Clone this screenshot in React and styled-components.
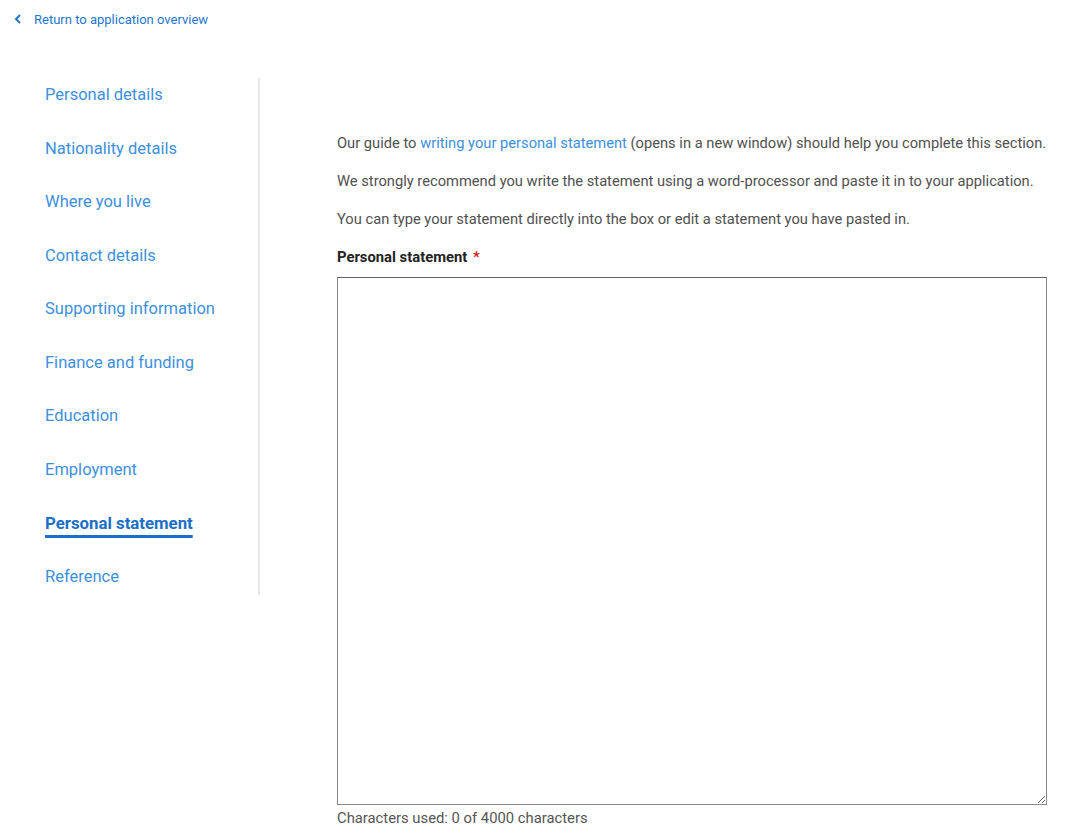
import styled, { createGlobalStyle } from "styled-components";

const GlobalStyle = createGlobalStyle`
  body {
    margin: 0;
    background: #ffffff;
    font-family: Roboto, "Liberation Sans", Arial, sans-serif;
  }
`;

const sections = [
  "Personal details",
  "Nationality details",
  "Where you live",
  "Contact details",
  "Supporting information",
  "Finance and funding",
  "Education",
  "Employment",
  "Personal statement",
  "Reference",
];

export default function App() {
  const active = "Personal statement";
  const maxChars = 4000;
  return (
    <Page>
      <GlobalStyle />
      <TopBar>
        <BackLink href="#">
          <svg width="8" height="10" viewBox="0 0 8 10" aria-hidden="true">
            <path d="M6 1 L2 5 L6 9" fill="none" stroke="#1f76d2" strokeWidth="2" />
          </svg>
          Return to application overview
        </BackLink>
      </TopBar>
      <Layout>
        <SideNav>
          {sections.map((name) => (
            <NavItem key={name}>
              <NavLink href="#" $active={name === active}>
                {name}
              </NavLink>
            </NavItem>
          ))}
        </SideNav>
        <Main>
          <Paragraph>
            Our guide to <InlineLink href="#">writing your personal statement</InlineLink> (opens in a new
            window) should help you complete this section.
          </Paragraph>
          <Paragraph>
            We strongly recommend you write the statement using a word-processor and paste it in to your
            application.
          </Paragraph>
          <Paragraph>
            You can type your statement directly into the box or edit a statement you have pasted in.
          </Paragraph>
          <Label htmlFor="statement">
            Personal statement <Required>*</Required>
          </Label>
          <TextArea id="statement" />
          <Counter>Characters used: 0 of {maxChars} characters</Counter>
        </Main>
      </Layout>
    </Page>
  );
}

const Page = styled.div`
  width: 1080px;
  min-height: 835px;
`;

const TopBar = styled.div`
  height: 40px;
  padding-left: 14px;
  display: flex;
  align-items: center;
  box-sizing: border-box;
  padding-bottom: 2px;
`;

const BackLink = styled.a`
  display: flex;
  align-items: center;
  gap: 12px;
  font-size: 13px;
  color: #1f76d2;
  text-decoration: none;
`;

const Layout = styled.div`
  display: flex;
  margin-top: 38px;
`;

const SideNav = styled.ul`
  list-style: none;
  margin: 0;
  width: 260px;
  box-sizing: border-box;
  padding: 7px 0 8px 45px;
  border-right: 2px solid #e8e8e8;
  display: flex;
  flex-direction: column;
  gap: 33.5px;
  align-self: flex-start;
`;

const NavItem = styled.li`
  height: 20px;
  line-height: 20px;
`;

const NavLink = styled.a`
  display: inline-block;
  line-height: 20px;
  font-size: ${(p) => (p.$active ? "16.8px" : "16.5px")};
  text-decoration: none;
  color: ${(p) => (p.$active ? "#1a6fc9" : "#3d8fde")};
  font-weight: ${(p) => (p.$active ? 700 : 400)};
  ${(p) =>
    p.$active &&
    `
    text-decoration: underline;
    text-decoration-thickness: 3px;
    text-underline-offset: 6px;
  `}
`;

const Main = styled.main`
  padding: 55px 0 0 77px;
  width: 710px;
  display: flex;
  flex-direction: column;
`;

const Paragraph = styled.p`
  margin: 0 0 18px;
  font-size: 14.7px;
  line-height: 20px;
  color: #505050;
  white-space: nowrap;
`;

const InlineLink = styled.a`
  color: #3d8fde;
  text-decoration: none;
`;

const Label = styled.label`
  font-size: 14.8px;
  line-height: 20px;
  font-weight: 700;
  color: #222222;
  margin-bottom: 10px;
`;

const Required = styled.span`
  color: #d4202c;
  margin-left: 2px;
`;

const TextArea = styled.textarea`
  width: 710px;
  height: 528px;
  box-sizing: border-box;
  border: 1px solid #8a8a8a;
  border-top-color: #5f5f5f;
  resize: vertical;
  font-family: inherit;
  font-size: 14px;
`;

const Counter = styled.div`
  margin-top: 3px;
  font-size: 14.8px;
  line-height: 20px;
  color: #555555;
`;
